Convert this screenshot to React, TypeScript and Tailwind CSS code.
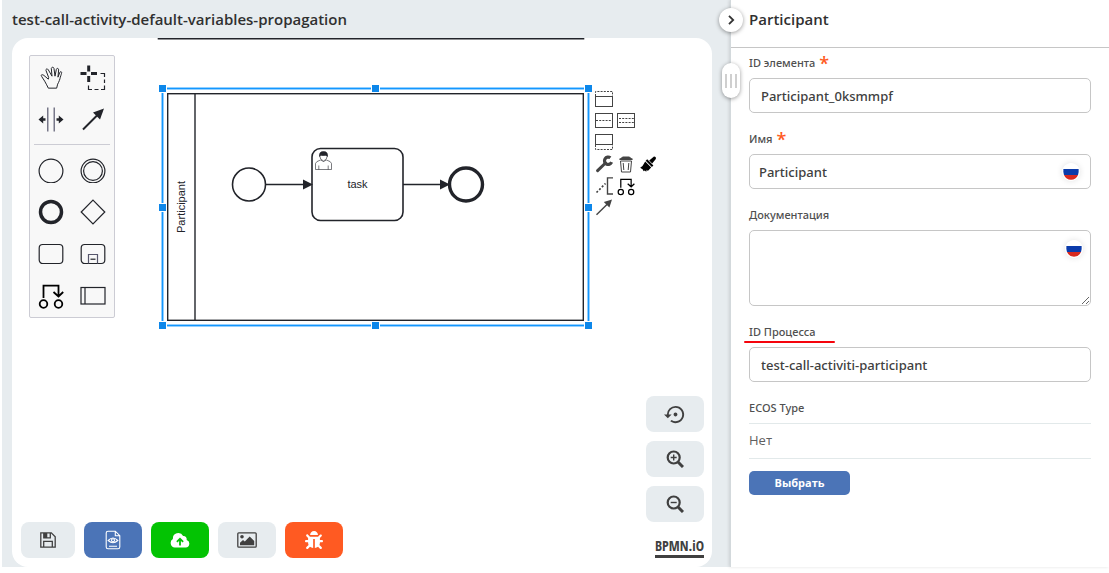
import React from "react";
import { MdSettingsBackupRestore } from "react-icons/md";
import { FaBug } from "react-icons/fa";

type DrawingProps = { label: string; children: React.ReactNode };

/* Palette drawings share a 26-unit box centred in a 42px cell. */
function PaletteTool({ label, children }: DrawingProps) {
  return (
    <button type="button" aria-label={label} className="flex size-[42px] items-center justify-center">
      <svg viewBox="0 0 26 26" className="size-[26px]" fill="none" stroke="#22242a" strokeWidth="1.2">
        {children}
      </svg>
    </button>
  );
}

/* Context pad drawings share a 20-unit box in a 22px cell. */
function PadTool({ label, children }: DrawingProps) {
  return (
    <button type="button" aria-label={label} className="flex size-[22px] items-center justify-center">
      <svg viewBox="0 0 20 20" className="size-5" fill="none" stroke="#444" strokeWidth="1">
        {children}
      </svg>
    </button>
  );
}

function CallLink() {
  return (
    <g stroke="#000" strokeWidth="1.8">
      <circle cx="5.5" cy="21" r="3.8" />
      <circle cx="20.5" cy="21" r="3.8" />
      <path d="M5.5 15V2.7H20.5V13M15.5 9L20.5 13.5L25.2 9" />
    </g>
  );
}

function Palette() {
  return (
    <div className="pointer-events-auto w-[86px] rounded-xs border border-[#ccccd4] bg-[#f8f8f8]">
      <div className="grid grid-cols-2">
        <PaletteTool label="Hand tool">
          <g transform="translate(2 2.5) scale(.333)">
            <path
              strokeWidth="3"
              d="M25 65H50L53 53C57 46 60 38 61 32C63 26 65 21 65 18C64 14 60 15 59 19L54 32L56 10C56 5 50 4 49 9L45 29L42 6C41 1 35 1 34 6L36 29L25 10C22 5 17 7 18 12L26 33L25 38L12 27C6 22 1 26 5 30L14 44L20 55Z"
            />
          </g>
        </PaletteTool>
        <PaletteTool label="Lasso tool">
          <path strokeWidth="3" d="M.5 9.5H6.5M11 9.5H17M8.7 1.5V7.5M8.7 12V18" />
          <path d="M20.5 9.5H24.5V13M24.5 15.5V19M24.5 21.5V25.5H21M18.5 25.5H14.5M12 25.5H8.5V21.5" />
        </PaletteTool>
        <PaletteTool label="Space tool">
          <path stroke="#56566c" strokeWidth="1.2" d="M9.8 1.5V25.5M16.2 1.5V25.5" />
          <path strokeWidth="2.6" d="M3 13.5H7.5M18.5 13.5H23" />
          <path fill="#22242a" stroke="none" d="M.5 13.5L5.2 9.5V17.5ZM25.5 13.5L20.8 9.5V17.5Z" />
        </PaletteTool>
        <PaletteTool label="Connect tool">
          <path strokeWidth="2" d="M3 23.5L17 9.5" />
          <path fill="#22242a" stroke="none" d="M24 2.5L20 13.5L13 6.5Z" />
        </PaletteTool>
      </div>
      <div className="mx-1 my-1 h-px bg-[#ccccd4]" />
      <div className="grid grid-cols-2">
        <PaletteTool label="Start event">
          <circle cx="13" cy="14" r="11.9" />
        </PaletteTool>
        <PaletteTool label="Intermediate event">
          <circle cx="13" cy="14" r="11.9" />
          <circle cx="13" cy="14" r="9.4" />
        </PaletteTool>
        <PaletteTool label="End event">
          <circle cx="13" cy="13" r="10.5" strokeWidth="3.5" />
        </PaletteTool>
        <PaletteTool label="Gateway">
          <path d="M13 1.2L24.8 13L13 24.8L1.2 13Z" />
        </PaletteTool>
        <PaletteTool label="Task">
          <rect x="1.2" y="3.5" width="23.6" height="19" rx="3.5" />
        </PaletteTool>
        <PaletteTool label="Sub-process">
          <rect x="1.2" y="3.5" width="23.6" height="19" rx="3.5" />
          <path stroke="#56566c" d="M8.5 22.5V13.5H17.5V22.5" />
          <path d="M10.5 18.2H15.5" />
        </PaletteTool>
        <PaletteTool label="Call link">
          <CallLink />
        </PaletteTool>
        <PaletteTool label="Participant">
          <rect x="1" y="4.5" width="24" height="16.5" />
          <path d="M5 4.5V21" />
        </PaletteTool>
      </div>
    </div>
  );
}

function ContextPad() {
  return (
    <div className="absolute top-[50px] left-[581px] flex flex-col">
      <div className="flex">
        <PadTool label="Add lane above">
          <path strokeDasharray="2 1.2" d="M1.5 7V2.5H18.5V7" />
          <rect x="1.5" y="7.5" width="17" height="10" />
        </PadTool>
      </div>
      <div className="flex">
        <PadTool label="Divide in two lanes">
          <rect x="1.5" y="2.5" width="17" height="14" />
          <path strokeDasharray="2 1.2" d="M2 9.5H18" />
        </PadTool>
        <PadTool label="Divide in three lanes">
          <rect x="1.5" y="2.5" width="17" height="14" />
          <path strokeDasharray="2 1.2" d="M3 7.5H18M3 11.5H18" />
        </PadTool>
      </div>
      <div className="flex">
        <PadTool label="Add lane below">
          <path strokeDasharray="2 1.2" d="M1.5 12V16.5H18.5V12" />
          <rect x="1.5" y="1.5" width="17" height="10" />
        </PadTool>
      </div>
      <div className="flex">
        <PadTool label="Change type">
          <path strokeWidth="3" strokeLinecap="round" d="M3.6 15.6L11.5 8" />
          <path strokeWidth="3.2" d="M16.4 2.8A3.7 3.7 0 1 0 17.6 7.2" />
        </PadTool>
        <PadTool label="Remove">
          <path fill="#444" d="M4.5 4L15.5 4L13.5 2H6.5Z" />
          <path strokeWidth="1.4" d="M3.4 4.3H16.6" />
          <path d="M4.5 6L5.5 17H14.5L15.5 6ZM7.2 8L7.8 15M12.8 8L12.2 15" />
        </PadTool>
        <PadTool label="Set color">
          <g fill="#000" stroke="none">
            <path d="M9.2 4.3L15.4 10.5L13.9 12L7.7 5.8Z" />
            <path d="M7.2 6.5L13.2 12.5L9.8 16L8.8 14.8L8.2 16.8L6.8 15.4L5.6 16.2L4.8 14.4L2.2 12.8L4.5 11Z" />
            <path d="M11.2 5.5L16 1.6Q18.5 2 17.8 4L14.2 8.5Z" />
          </g>
        </PadTool>
      </div>
      <div className="flex">
        <PadTool label="Add annotation">
          <path strokeWidth="1.4" d="M19 .9H13.5V17H19" />
          <path strokeWidth="1.7" strokeDasharray="2 1.8" d="M2.5 15.5L11.5 6.5" />
        </PadTool>
        <PadTool label="Call link">
          <g transform="translate(1 .5) scale(.69)">
            <CallLink />
          </g>
        </PadTool>
      </div>
      <div className="flex">
        <PadTool label="Connect">
          <path strokeWidth="1.4" d="M2.5 15.7L14 4.5" />
          <path fill="#444" stroke="none" d="M18 .4L15.4 8.6L9.8 3Z" />
        </PadTool>
      </div>
    </div>
  );
}

const handles = [
  [162, 88], [375, 88], [588, 88],
  [162, 207], [588, 207],
  [162, 325], [375, 325], [588, 325],
];

function Diagram() {
  return (
    <svg className="absolute inset-0 size-full" fill="none" stroke="#22242a" aria-label="Process diagram">
      <g transform="translate(-12 -38)" fontFamily="Liberation Sans, sans-serif" fontSize="11">
        <path strokeWidth="1.6" d="M158.5 30V38.8H583.5V30M186 30V38.8" />
        <rect x="167.7" y="93.7" width="415.6" height="226.6" strokeWidth="1.4" />
        <path strokeWidth="1.4" d="M195 94V320" />
        <text transform="translate(185 207) rotate(-90)" textAnchor="middle" fill="#22242a" stroke="none">
          Participant
        </text>
        <circle cx="249" cy="184.5" r="16.5" strokeWidth="1.6" />
        <path strokeWidth="1.6" d="M266 184.5H304M403 184.5H441" />
        <rect x="312" y="148.5" width="91" height="72" rx="8.5" strokeWidth="1.6" />
        <path fill="#22242a" stroke="none" d="M303 179.5L313 184.5L303 189.5ZM440 179.5L450 184.5L440 189.5Z" />
        <circle cx="466" cy="184.5" r="16.5" strokeWidth="3.4" />
        <text x="357.5" y="188" textAnchor="middle" fill="#22242a" stroke="none">
          task
        </text>
        <g strokeWidth=".6">
          <path d="M315.5 169.5V163.5Q315.8 161.5 320.5 160Q323.5 163 326.5 160Q331.3 161.5 331.5 163.5V169.5ZM318.8 169.5V165.5M328.2 169.5V165.5" />
          <path fill="#fff" d="M319.6 155.5Q320 160 323.5 161Q327 160 327.4 155.5Z" />
          <path fill="#22242a" d="M319.6 156.5Q318.7 151.6 323.5 151.5Q328.3 151.6 327.4 156.5Q326.5 155 325.5 155Q322 155.8 321 154.7Q320 155.2 319.6 156.5Z" />
        </g>
        <rect x="162.5" y="88.5" width="426" height="237" stroke="#1397ff" strokeWidth="1.9" />
        {handles.map(([x, y]) => (
          <rect key={`${x}-${y}`} x={x - 3.5} y={y - 3.5} width="8" height="8" fill="#0d87ea" stroke="#fff" />
        ))}
      </g>
    </svg>
  );
}

function ZoomGlyph({ plus }: { plus?: boolean }) {
  return (
    <svg viewBox="0 0 18 18" className="size-[18px]" fill="none" stroke="#404040">
      <circle cx="7.7" cy="7.5" r="6" strokeWidth="2.2" />
      <path strokeWidth="3" d="M12 12L17 17" />
      <path strokeWidth="1.4" d={plus ? "M4.7 7.5H10.7M7.7 4.5V10.5" : "M4.7 7.5H10.7"} />
    </svg>
  );
}

function ViewControls() {
  const style = "flex h-9 w-[58px] items-center justify-center rounded-lg bg-[#e7ecef]";
  return (
    <div className="pointer-events-auto flex flex-col items-end gap-[9px]">
      <button type="button" aria-label="Reset view" className={style}>
        <MdSettingsBackupRestore className="size-[23px] text-[#404040]" />
      </button>
      <button type="button" aria-label="Zoom in" className={style}>
        <ZoomGlyph plus />
      </button>
      <button type="button" aria-label="Zoom out" className={style}>
        <ZoomGlyph />
      </button>
      <a
        href="#bpmn"
        className="mt-1.5 border-b-3 border-[#404040] font-['Open_Sans_Condensed','Roboto_Condensed','Liberation_Sans',sans-serif] text-sm leading-[18px] font-bold text-[#404040]"
      >
        BPMN.iO
      </a>
    </div>
  );
}

function Toolbar() {
  return (
    <div className="pointer-events-auto flex gap-[9px]">
      <button type="button" aria-label="Save" className="flex h-9 w-[54px] items-center justify-center rounded-lg bg-[#e7ecef]">
        <svg viewBox="0 0 16 16" className="size-4" fill="none" stroke="#404040" strokeWidth="1.3">
          <path d="M.8 .8H11.3L15.2 4.7V15.2H.8Z" />
          <path d="M3.7 15V9.3H12.3V15" />
          <path d="M3.8 1V5.8H10.3V1" />
          <path fill="#404040" stroke="none" d="M3.8 1H7.3V6H3.8Z" />
        </svg>
      </button>
      <button type="button" aria-label="Save draft" className="flex h-9 w-[58px] items-center justify-center rounded-lg bg-[#4b74b7]">
        <svg viewBox="0 0 16 20" className="h-5 w-4" fill="none" stroke="#fff" strokeWidth="1.1">
          <path d="M3 1.2H10.3L14.8 5.7V17Q14.8 18.8 13 18.8H3Q1.2 18.8 1.2 17V3Q1.2 1.2 3 1.2ZM10.3 1.2V5.7H14.8" />
          <path d="M3.2 10.5Q8 5.5 12.8 10.5Q8 15 3.2 10.5ZM4 16.2H12" />
          <circle cx="8" cy="10.3" r="1.5" />
        </svg>
      </button>
      <button type="button" aria-label="Publish" className="flex h-9 w-[58px] items-center justify-center rounded-lg bg-[#03c303]">
        <svg viewBox="0 0 20 15" className="h-[15px] w-5">
          <path fill="#fff" d="M4.8 14.5A4.6 4.6 0 0 1 2.9 6A5.4 5.4 0 0 1 13.1 3.1A3.1 3.1 0 0 1 16.6 6.9A3.9 3.9 0 0 1 15.8 14.5Z" />
          <path fill="none" stroke="#03c303" strokeWidth="1.8" d="M10 12.5V6.5M6.9 8.8L10 5.7L13.1 8.8" />
        </svg>
      </button>
      <button type="button" aria-label="Save as image" className="flex h-9 w-[58px] items-center justify-center rounded-lg bg-[#e7ecef]">
        <svg viewBox="0 0 20 16" className="h-4 w-5" fill="none" stroke="#404040" strokeWidth="1.3">
          <rect x=".8" y=".8" width="18.4" height="14.4" rx="1" />
          <g fill="#404040" stroke="none">
            <circle cx="5" cy="4.8" r="1.8" />
            <path d="M3 13.2V10.8L6 8L7.8 9.6L12.7 4.5L17.2 9V13.2Z" />
          </g>
        </svg>
      </button>
      <button type="button" aria-label="Debug" className="flex h-9 w-[58px] items-center justify-center rounded-lg bg-[#ff5a22]">
        <FaBug className="size-[18px] text-white" />
      </button>
    </div>
  );
}

function Flag() {
  return (
    <svg viewBox="0 0 18 18" className="size-[18px] rounded-full shadow-[0_0_6px_rgba(0,0,0,0.12)]" aria-label="Русский">
      <circle cx="9" cy="9" r="9" fill="#fff" />
      <path fill="#0b3bab" d="M1.4 6H16.6Q17 9 16 12H2Q1 9 1.4 6Z" />
      <path fill="#d8291f" d="M2 12H16Q14 16.8 9 16.8Q4 16.8 2 12Z" />
    </svg>
  );
}

const field =
  "block w-full rounded-[5px] border border-[#c6c6c6] bg-white font-['Noto_Sans',sans-serif] text-[13px] font-medium text-[#404040] outline-none";

function Label({ id, required, children }: { id: string; required?: boolean; children: React.ReactNode }) {
  return (
    <label htmlFor={id} className="mb-[5px] flex h-5 items-center gap-1 font-['Noto_Sans',sans-serif] text-[11px] font-medium text-[#505050]">
      {children}
      {required && <span className="font-['Open_Sans',sans-serif] text-lg leading-5 font-semibold text-[#ff5a22]">*</span>}
    </label>
  );
}

function Properties() {
  return (
    <aside className="relative flex w-[379px] shrink-0 flex-col border-l border-[#d3d9dc] bg-white shadow-[-1px_0_3px_rgba(0,0,0,0.12)]">
      <button
        type="button"
        aria-label="Collapse panel"
        className="absolute top-2 -left-3 flex size-6 items-center justify-center rounded-full bg-white shadow-[0_1px_4px_rgba(0,0,0,0.4)]"
      >
        <svg viewBox="0 0 10 10" className="size-2.5" fill="none" stroke="#333" strokeWidth="1.8">
          <path d="M3 .8L7.2 5L3 9.2" />
        </svg>
      </button>
      <div className="absolute top-[63px] -left-[9px] flex h-[35px] w-[18px] items-center justify-center gap-[3px] rounded-full bg-white shadow-[0_1px_4px_rgba(0,0,0,0.4)]">
        <span className="h-3.5 w-0.5 bg-[#cfcfcf]" />
        <span className="h-3.5 w-0.5 bg-[#cfcfcf]" />
        <span className="h-3.5 w-0.5 bg-[#cfcfcf]" />
      </div>

      <header className="flex h-12 items-center border-b border-[#c6c6c6] px-[18px] pb-2">
        <h2 className="text-[15px] font-semibold text-[#303030]">Participant</h2>
      </header>

      <form className="flex flex-col gap-4 px-[18px] pt-[5px]">
        <div>
          <Label id="element-id" required>ID элемента</Label>
          <input id="element-id" defaultValue="Participant_0ksmmpf" className={`${field} h-[35px] px-[11px]`} />
        </div>
        <div>
          <Label id="name" required>Имя</Label>
          <div className="relative">
            <input id="name" defaultValue="Participant" className={`${field} h-[35px] px-[9px]`} />
            <span className="absolute top-[9px] right-[11px]">
              <Flag />
            </span>
          </div>
        </div>
        <div>
          <Label id="documentation">Документация</Label>
          <div className="relative">
            <textarea id="documentation" className={`${field} h-[76px] resize-y px-[9px] py-2`} />
            <span className="absolute top-2.5 right-2">
              <Flag />
            </span>
          </div>
        </div>
        <div className="relative">
          <Label id="process-id">ID Процесса</Label>
          <span className="absolute top-[19px] -left-[5px] h-0.5 w-[91px] rounded-full bg-[#f5040c]" />
          <input id="process-id" defaultValue="test-call-activiti-participant" className={`${field} h-[35px] px-[11px]`} />
        </div>
        <div>
          <h3 className="mb-[5px] flex h-5 items-center font-['Noto_Sans',sans-serif] text-[11px] font-medium text-[#505050]">ECOS Type</h3>
          <p className="flex h-9 items-center border-y border-[#e2e9ea] text-[13px] text-[#606060]">Нет</p>
          <button type="button" className="mt-3 h-6 w-[101px] rounded-[5px] bg-[#4b74b7] text-[11px] font-bold text-white">
            Выбрать
          </button>
        </div>
      </form>
    </aside>
  );
}

export default function App() {
  return (
    <div className="flex h-screen min-h-[520px] bg-white pb-1.5 pl-0.5 font-['Open_Sans',sans-serif]">
      <main className="flex min-w-0 flex-1 flex-col bg-[#e7ecef] pr-[18px] pl-2.5">
        <h1 className="flex h-[38px] items-center text-[15px] font-semibold text-[#303030]">
          test-call-activity-default-variables-propagation
        </h1>
        <section className="relative flex min-h-0 flex-1 flex-col justify-between overflow-hidden rounded-2xl bg-white">
          <Diagram />
          <ContextPad />
          <div className="pointer-events-none relative flex pt-[17px] pl-[17px]">
            <Palette />
          </div>
          <div className="pointer-events-none relative flex items-end justify-between pr-2 pb-[9px] pl-[9px]">
            <Toolbar />
            <ViewControls />
          </div>
        </section>
      </main>
      <Properties />
    </div>
  );
}
